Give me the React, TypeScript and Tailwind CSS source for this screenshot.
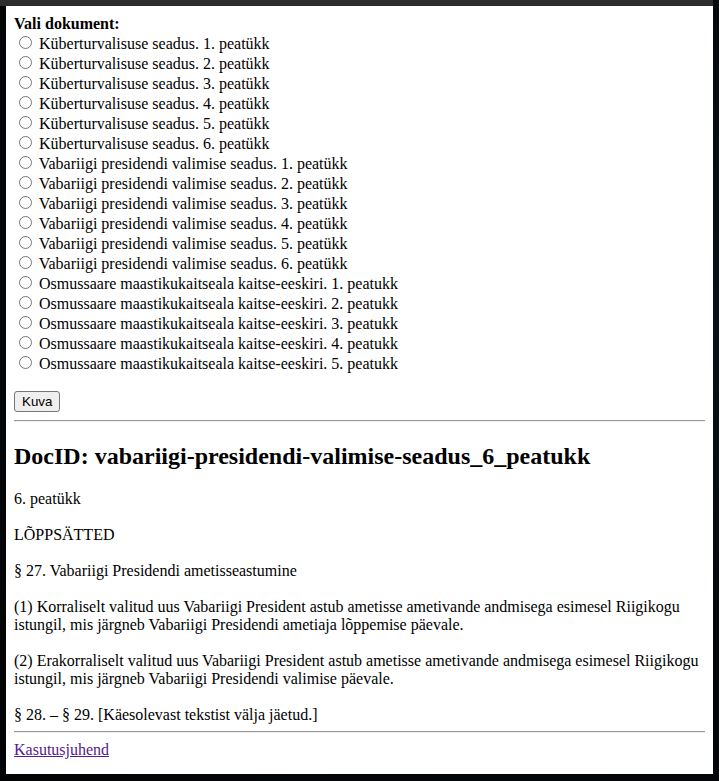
import React from "react";

const docs = [
  "Küberturvalisuse seadus. 1. peatükk",
  "Küberturvalisuse seadus. 2. peatükk",
  "Küberturvalisuse seadus. 3. peatükk",
  "Küberturvalisuse seadus. 4. peatükk",
  "Küberturvalisuse seadus. 5. peatükk",
  "Küberturvalisuse seadus. 6. peatükk",
  "Vabariigi presidendi valimise seadus. 1. peatükk",
  "Vabariigi presidendi valimise seadus. 2. peatükk",
  "Vabariigi presidendi valimise seadus. 3. peatükk",
  "Vabariigi presidendi valimise seadus. 4. peatükk",
  "Vabariigi presidendi valimise seadus. 5. peatükk",
  "Vabariigi presidendi valimise seadus. 6. peatükk",
  "Osmussaare maastikukaitseala kaitse-eeskiri. 1. peatukk",
  "Osmussaare maastikukaitseala kaitse-eeskiri. 2. peatukk",
  "Osmussaare maastikukaitseala kaitse-eeskiri. 3. peatukk",
  "Osmussaare maastikukaitseala kaitse-eeskiri. 4. peatukk",
  "Osmussaare maastikukaitseala kaitse-eeskiri. 5. peatukk",
];

const body = `6. peatükk

LÕPPSÄTTED

§ 27. Vabariigi Presidendi ametisseastumine

(1) Korraliselt valitud uus Vabariigi President astub ametisse ametivande andmisega esimesel Riigikogu istungil, mis järgneb Vabariigi Presidendi ametiaja lõppemise päevale.

(2) Erakorraliselt valitud uus Vabariigi President astub ametisse ametivande andmisega esimesel Riigikogu istungil, mis järgneb Vabariigi Presidendi valimise päevale.

§ 28. – § 29. [Käesolevast tekstist välja jäetud.]`;

function Hr() {
  return <div className="h-[2px] border-t border-t-[#9a9a9a] border-b border-b-[#eeeeee]" />;
}

export default function App() {
  return (
    <div className="min-h-[781px] w-full bg-[radial-gradient(ellipse_at_70%_40%,#0d1a26_0%,#04070b_60%,#020304_100%)] font-['Liberation_Serif',serif] text-[16px] text-black">
      <div className="h-[6px] w-[713px] bg-[#2d2d2d]" />
      <div className="ml-[6px] h-[768px] w-[707px] bg-white px-[8px] pt-[8px]">
        <form onSubmit={(e) => e.preventDefault()}>
          <div className="h-[20px] leading-[20px] font-bold">Vali dokument:</div>
          {docs.map((d, i) => (
            <label key={i} className="block h-[20px] leading-[20px] whitespace-nowrap">
              <input
                type="radio"
                name="doc"
                className="ml-[5px] mr-[3px] mt-[2px] h-[13px] w-[13px]"
                defaultChecked={false}
              />{" "}
              {d}
            </label>
          ))}
          <div className="mt-[17px] flex">
            <button
              type="submit"
              className="h-[21px] rounded-[3px] border border-[#767676] bg-[#efefef] px-[7px] font-['Liberation_Sans',sans-serif] text-[13.333px] leading-[17px] text-black"
            >
              Kuva
            </button>
          </div>
        </form>
        <div className="mt-[8px]">
          <Hr />
        </div>
        <h2 className="mt-[20px] mb-[20px] text-[24px] font-bold leading-[28px]">
          DocID: vabariigi-presidendi-valimise-seadus_6_peatukk
        </h2>
        <div className="whitespace-pre-wrap leading-[18px]">{body}</div>
        <div className="mt-[7px]">
          <Hr />
        </div>
        <div className="mt-[8px] leading-[18px]">
          <a href="#" className="text-[#551a8b] underline">
            Kasutusjuhend
          </a>
        </div>
      </div>
    </div>
  );
}
